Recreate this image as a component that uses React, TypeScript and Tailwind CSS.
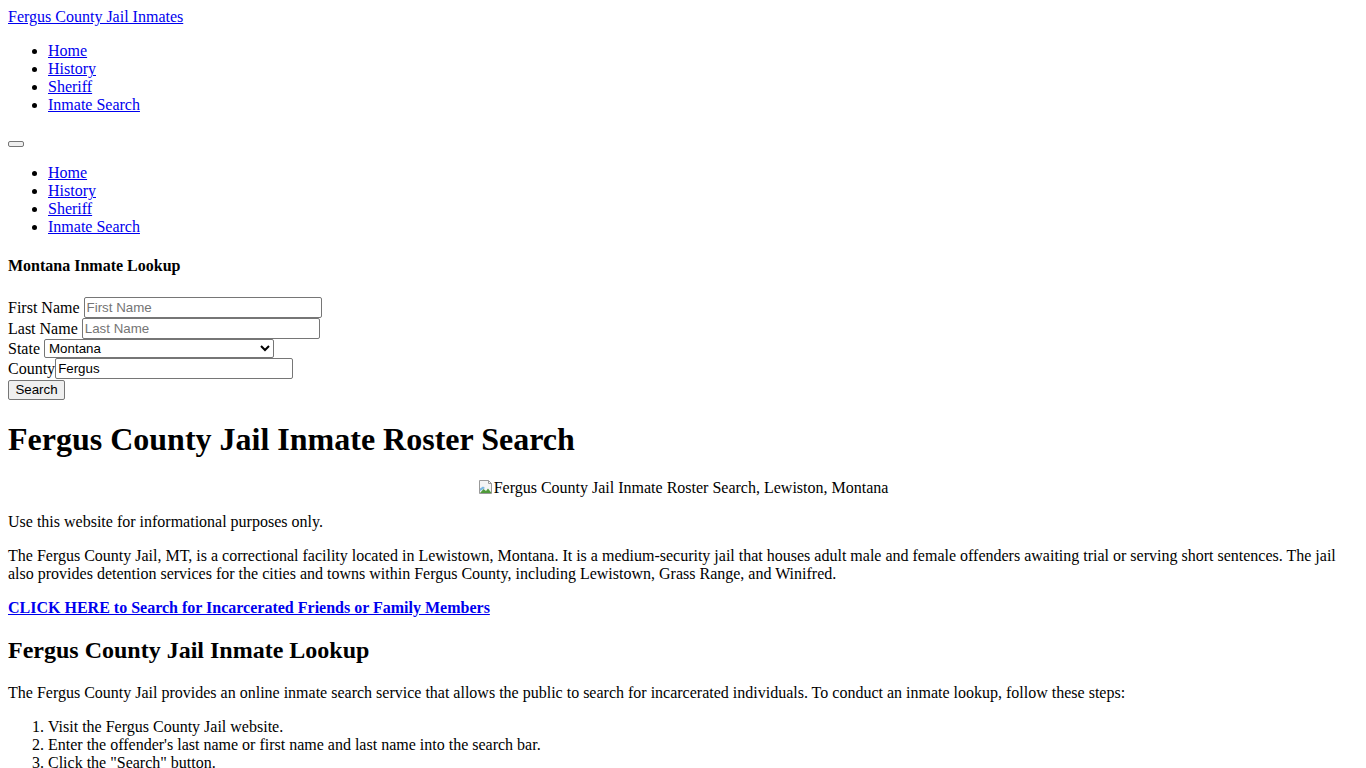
const navLinks = ["Home", "History", "Sheriff", "Inmate Search"];

const steps = [
  "Visit the Fergus County Jail website.",
  "Enter the offender's last name or first name and last name into the search bar.",
  'Click the "Search" button.',
];

function NavList() {
  return (
    <ul className="list-disc pl-10 my-4">
      {navLinks.map((label) => (
        <li key={label} className="h-[18px]">
          <a href="#" className="text-[#0000ee] underline">
            {label}
          </a>
        </li>
      ))}
    </ul>
  );
}

function BrokenImage() {
  return (
    <svg width="16" height="16" viewBox="0 0 16 16" className="inline-block align-[-2px]">
      <path d="M1.5 1.5h9l3 3v10h-12z" fill="#f4f4f4" stroke="#9a9a9a" />
      <path d="M10.5 1.5v3h3" fill="none" stroke="#9a9a9a" />
      <path d="M2 14l3.5-4 2.5 2 2-2.5 3.5 4.5z" fill="#4f9a3a" />
      <path d="M2 9.5l3-2 2 1.5-5 3z" fill="#7ab6e0" />
    </svg>
  );
}

const inputCls =
  "h-[21px] border border-[#767676] rounded-[2px] px-[2px] text-[13.33px] text-black placeholder:text-[#757575] bg-white";

export default function App() {
  return (
    <div className="m-2 text-[16px] leading-[18px] text-black font-['Liberation_Serif','Times_New_Roman',serif]">
      <div className="h-[18px]">
        <a href="#" className="text-[#0000ee] underline">
          Fergus County Jail Inmates
        </a>
      </div>

      <NavList />

      <div className="h-[18px] pt-[11px] flex">
        <button className="w-[16px] h-[6px] border border-[#767676] rounded-[2px] bg-[#efefef]" />
      </div>

      <NavList />

      <h4 className="font-bold mt-[21px] mb-[21px] h-[18px]">Montana Inmate Lookup</h4>

      <form className="pt-[1px]">
        <div className="flex items-center h-[21px]">
          <span className="mr-[4px]">First Name</span>
          <input
            placeholder="First Name"
            className={`${inputCls} w-[238px] font-['Liberation_Sans',Arial,sans-serif]`}
          />
        </div>
        <div className="flex items-center h-[21px]">
          <span className="mr-[4px]">Last Name</span>
          <input
            placeholder="Last Name"
            className={`${inputCls} w-[238px] font-['Liberation_Sans',Arial,sans-serif]`}
          />
        </div>
        <div className="flex items-center h-[19px]">
          <span className="mr-[4px]">State</span>
          <select
            defaultValue="Montana"
            className="h-[19px] w-[230px] border border-[#767676] rounded-[2px] text-[13.33px] bg-white font-['Liberation_Sans',Arial,sans-serif]"
          >
            <option>Montana</option>
          </select>
        </div>
        <div className="flex items-center h-[21px]">
          <span>County</span>
          <input
            defaultValue="Fergus"
            className={`${inputCls} w-[238px] font-['Liberation_Sans',Arial,sans-serif]`}
          />
        </div>
        <div className="flex items-center h-[21px]">
          <button
            type="button"
            className="h-[20px] w-[57px] border border-[#767676] rounded-[2px] bg-[#efefef] text-[13.33px] font-['Liberation_Sans',Arial,sans-serif]"
          >
            Search
          </button>
        </div>
      </form>

      <h1 className="text-[32px] leading-[37px] font-bold my-[21px]">
        Fergus County Jail Inmate Roster Search
      </h1>

      <p className="text-center my-4">
        <BrokenImage />
        Fergus County Jail Inmate Roster Search, Lewiston, Montana
      </p>

      <p className="my-4">Use this website for informational purposes only.</p>

      <p className="my-4">
        The Fergus County Jail, MT, is a correctional facility located in Lewistown, Montana. It is a
        medium-security jail that houses adult male and female offenders awaiting trial or serving short
        sentences. The jail also provides detention services for the cities and towns within Fergus County,
        including Lewistown, Grass Range, and Winifred.
      </p>

      <p className="my-4">
        <a href="#" className="text-[#0000ee] underline font-bold">
          CLICK HERE to Search for Incarcerated Friends or Family Members
        </a>
      </p>

      <h2 className="text-[24px] leading-[28px] font-bold mt-[19px] mb-[20px]">Fergus County Jail Inmate Lookup</h2>

      <p className="my-4">
        The Fergus County Jail provides an online inmate search service that allows the public to search for
        incarcerated individuals. To conduct an inmate lookup, follow these steps:
      </p>

      <ol className="list-decimal pl-10 my-4">
        {steps.map((s) => (
          <li key={s}>{s}</li>
        ))}
      </ol>
    </div>
  );
}
